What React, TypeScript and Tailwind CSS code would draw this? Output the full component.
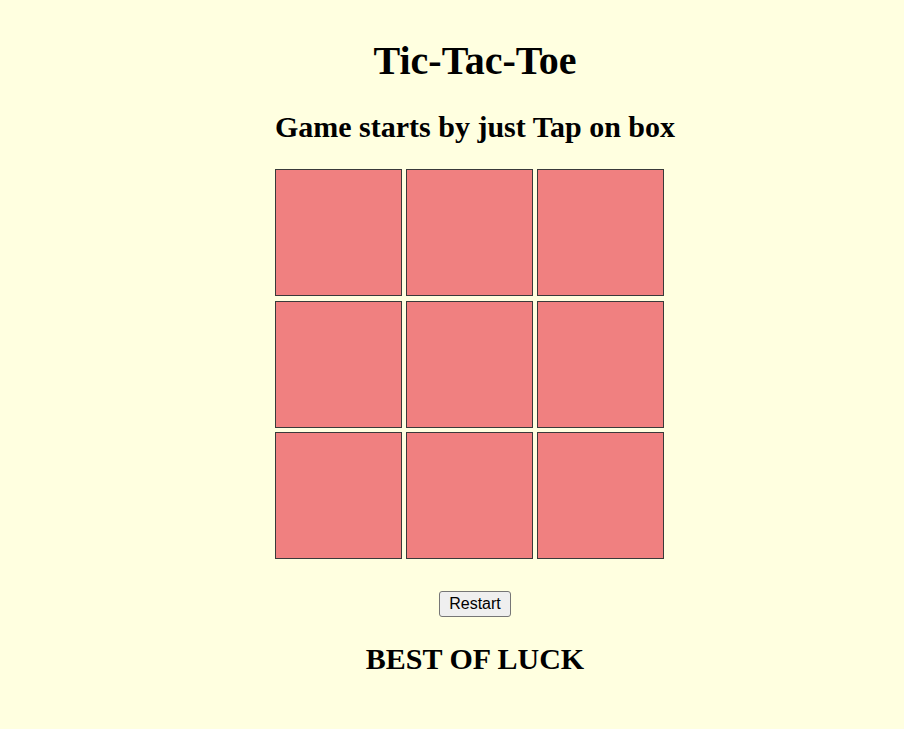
import React from "react";

export default function App() {
  const cells = Array.from({ length: 9 }, (_, i) => i);
  return (
    <div className="w-full min-h-screen bg-[#ffffe0] flex flex-col items-center pl-[46px] text-black font-['Liberation_Serif','Times_New_Roman',serif]">
      <h1 className="mt-[41px] text-[40px] leading-[40px] font-bold">Tic-Tac-Toe</h1>
      <h2 className="mt-[31px] text-[30px] leading-[30px] font-bold">Game starts by just Tap on box</h2>
      <div className="mt-[27px] mr-[11px] grid grid-cols-[127px_127px_127px] gap-x-[4px] gap-y-[4.5px]">
        {cells.map((i) => (
          <button
            key={i}
            className="w-[127px] h-[127px] bg-[#f08080] border border-[#3a3a3a]"
          />
        ))}
      </div>
      <button className="mt-[32px] px-[9px] py-[3px] text-[16px] leading-[18px] font-['Liberation_Sans',Arial,sans-serif] bg-[#efefef] border border-[#767676] rounded-[3px] text-black">
        Restart
      </button>
      <h2 className="mt-[27px] text-[30px] leading-[30px] font-bold">BEST OF LUCK</h2>
    </div>
  );
}
